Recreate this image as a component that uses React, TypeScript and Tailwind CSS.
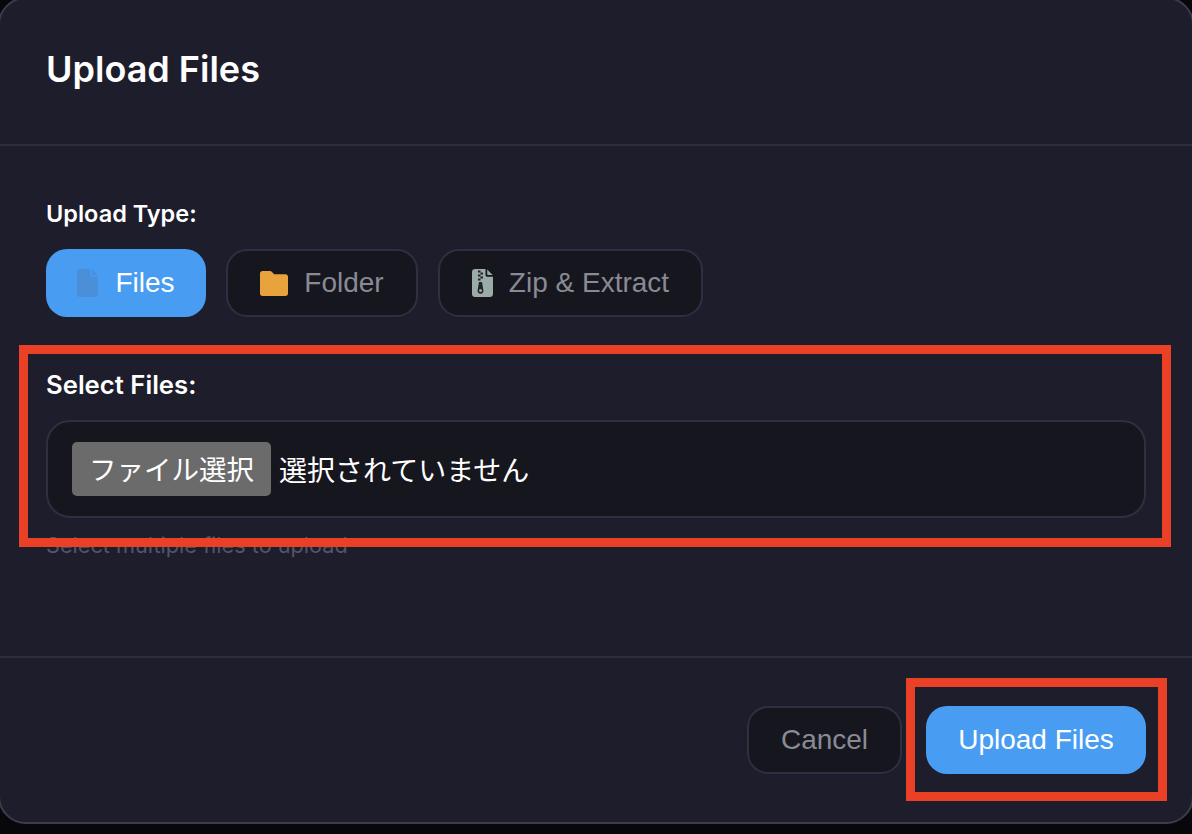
import React from "react";

const inter = "font-['Inter',sans-serif]";
const arial = "font-['Liberation_Sans',Arial,sans-serif]";

function FileIcon() {
  return (
    <svg width="21" height="28" viewBox="0 0 21 28" className="shrink-0">
      <path d="M3 0H13.5V6C13.5 7 14.2 7.7 15.2 7.7H21V25C21 26.7 19.7 28 18 28H3C1.3 28 0 26.7 0 25V3C0 1.3 1.3 0 3 0Z" fill="#4a8fd8" />
      <path d="M15.2 0.5L20.6 6H16C15.5 6 15.2 5.7 15.2 5.2Z" fill="#4a8fd8" />
    </svg>
  );
}

function FolderIcon() {
  return (
    <svg width="28" height="25" viewBox="0 0 28 25" className="shrink-0">
      <path d="M2.5 0H10C10.8 0 11.5 0.3 12 0.9L14.2 3.3H25.5C26.9 3.3 28 4.4 28 5.8V22.5C28 23.9 26.9 25 25.5 25H2.5C1.1 25 0 23.9 0 22.5V2.5C0 1.1 1.1 0 2.5 0Z" fill="#e8a33d" />
    </svg>
  );
}

function ZipIcon() {
  return (
    <svg width="21" height="28" viewBox="0 0 21 28" className="shrink-0">
      <path d="M3 0H13.5V6C13.5 7 14.2 7.7 15.2 7.7H21V25C21 26.7 19.7 28 18 28H3C1.3 28 0 26.7 0 25V3C0 1.3 1.3 0 3 0Z" fill="#9aaba8" />
      <path d="M15.2 0.5L20.6 6H16C15.5 6 15.2 5.7 15.2 5.2Z" fill="#9aaba8" />
      <path d="M6 1.5H8.5V3.5H6ZM8.5 3.5H11V5.5H8.5ZM6 5.5H8.5V7.5H6ZM8.5 7.5H11V9.5H8.5ZM6 9.5H8.5V11.5H6Z" fill="#23232c" />
      <path d="M7 13H10L11.4 21.5C11.7 23.3 10.3 24.8 8.5 24.8C6.7 24.8 5.3 23.3 5.6 21.5Z" fill="#23232c" />
      <circle cx="8.5" cy="21.6" r="1.5" fill="#9aaba8" />
    </svg>
  );
}

export default function App() {
  const idle = `flex h-[68px] items-center justify-center gap-[16px] rounded-[21px] border-2 border-[#2f2f42] bg-[#16161f] text-[28px] text-[#8a8a94] ${arial}`;
  return (
    <div className="relative h-[834px] w-[1192px] overflow-hidden bg-[#08080c]">
      <div className="-mt-[3px] -ml-[2px] flex h-[827px] w-[1196px] flex-col rounded-[28px] border-2 border-[#3c3c4a] bg-[#1d1d2b]">
        <div className="flex h-[147px] shrink-0 items-center border-b-2 border-[#2d2d3f] px-[46px] pb-[6px]">
          <h2 className={`text-[36px] font-semibold text-white ${inter}`}>Upload Files</h2>
        </div>

        <div className="flex-1 px-[46px] pt-[52px]">
          <div className={`mb-[19px] text-[23.5px] leading-[32px] font-semibold text-white ${inter}`}>Upload Type:</div>
          <div className="flex gap-5">
            <button className={`flex h-[68px] w-[160px] items-center justify-center gap-[17px] rounded-[21px] bg-[#489cf2] text-[28px] text-white ${arial}`}>
              <FileIcon />
              <span>Files</span>
            </button>
            <button className={`w-[192px] ${idle}`}>
              <FolderIcon />
              <span>Folder</span>
            </button>
            <button className={`w-[265px] ${idle}`}>
              <ZipIcon />
              <span>Zip &amp; Extract</span>
            </button>
          </div>

          <div className={`mt-[52px] mb-[19px] text-[25.7px] leading-[32px] font-semibold text-white ${inter}`}>Select Files:</div>
          <div className="flex h-[98px] w-[1100px] items-center rounded-[24px] border-2 border-[#2f2f42] bg-[#16161f] pl-[24px] font-['Noto_Sans_CJK_JP',sans-serif] text-[28px] text-white">
            <span className="flex h-[54px] w-[199px] items-center justify-center rounded-[5px] bg-[#6b6b6b] text-[27.5px]">ファイル選択</span>
            <span className="ml-[8px]">選択されていません</span>
          </div>
          <div className={`mt-[12px] text-[21.7px] leading-[30px] text-[#54546a] ${inter}`}>Select multiple files to upload</div>
        </div>

        <div className="flex h-[166px] shrink-0 items-start justify-end gap-6 border-t-2 border-[#2d2d3f] px-[46px] pt-[48px]">
          <button className={`h-[68px] w-[155px] rounded-[21px] border-2 border-[#2f2f42] bg-[#16161f] text-[28px] text-[#8a8a94] ${arial}`}>Cancel</button>
          <button className={`h-[68px] w-[220px] rounded-[21px] bg-[#489cf2] text-[28px] text-white ${arial}`}>Upload Files</button>
        </div>
      </div>

      <div className="absolute top-[345px] left-[19px] h-[202px] w-[1152px] border-[9px] border-[#ea4026]" />
      <div className="absolute top-[678px] left-[906px] h-[123px] w-[261px] border-[9px] border-[#ea4026]" />
    </div>
  );
}
